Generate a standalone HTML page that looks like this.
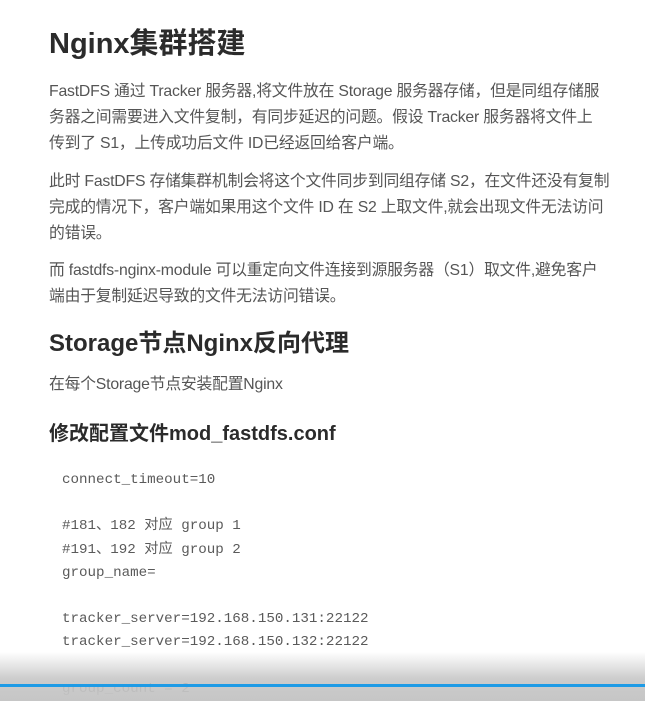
<!DOCTYPE html>
<html><head><meta charset="utf-8"><style>
body{margin:0;width:645px;height:701px;overflow:hidden;background:#fff;position:relative;font-family:"Liberation Sans","Noto Sans CJK SC",sans-serif;}
.a{position:absolute;left:49px;white-space:nowrap;}
h1,h2,h3{margin:0;color:#2b2b2b;font-weight:bold;}
.p{font-size:15.8px;color:#555;line-height:26px;letter-spacing:-0.2px;}
.c{position:absolute;left:62px;font-family:"Liberation Mono","Noto Sans CJK SC",monospace;font-size:14.2px;color:#5a5a5a;white-space:pre;line-height:23.2px;}
</style></head><body>
<h1 class="a" style="top:20px;font-size:29px;">Nginx集群搭建</h1>
<div class="a p" style="top:79px;">FastDFS 通过 Tracker 服务器,将文件放在 Storage 服务器存储，但是同组存储服<br>务器之间需要进入文件复制，有同步延迟的问题。假设 Tracker 服务器将文件上<br>传到了 S1，上传成功后文件 ID已经返回给客户端。</div>
<div class="a p" style="top:169px;">此时 FastDFS 存储集群机制会将这个文件同步到同组存储 S2，在文件还没有复制<br>完成的情况下，客户端如果用这个文件 ID 在 S2 上取文件,就会出现文件无法访问<br>的错误。</div>
<div class="a p" style="top:258px;">而 fastdfs-nginx-module 可以重定向文件连接到源服务器（S1）取文件,避免客户<br>端由于复制延迟导致的文件无法访问错误。</div>
<h2 class="a" style="top:323px;font-size:24px;">Storage节点Nginx反向代理</h2>
<div class="a p" style="top:372px;">在每个Storage节点安装配置Nginx</div>
<h3 class="a" style="top:417px;font-size:20px;">修改配置文件mod_fastdfs.conf</h3>
<div class="c" style="top:469px;">connect_timeout=10

#181、182 对应 group 1
#191、192 对应 group 2
group_name=

tracker_server=192.168.150.131:22122
tracker_server=192.168.150.132:22122

group_count = 2</div>
<div style="position:absolute;left:0;top:652px;width:645px;height:49px;background:linear-gradient(to bottom,rgba(200,200,200,0),rgba(195,195,195,0.85) 55%,#c6c6c6);"></div>
<div style="position:absolute;left:0;top:684px;width:645px;height:3px;background:#1e9be6;"></div>
</body></html>
